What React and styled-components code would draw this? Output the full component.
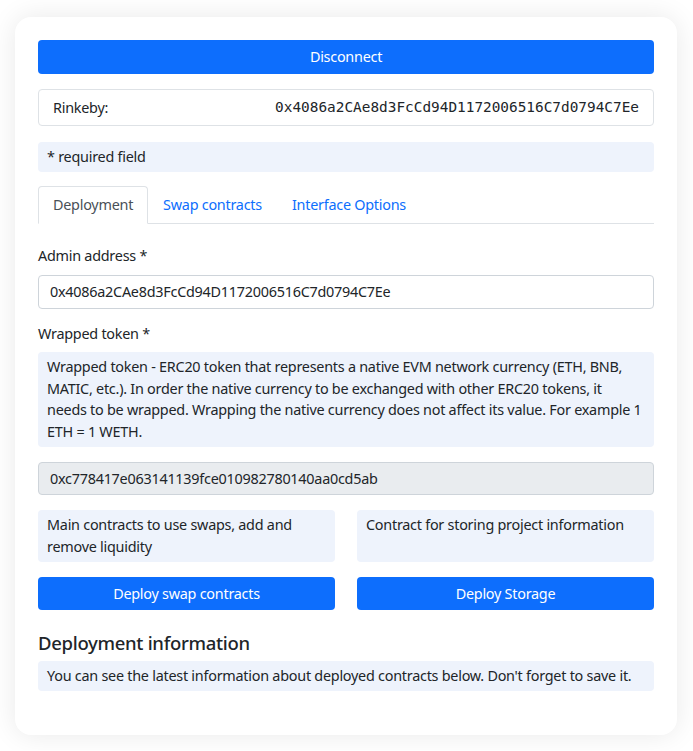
import styled, { createGlobalStyle } from "styled-components";

const GlobalStyle = createGlobalStyle`
  * { box-sizing: border-box; }
  body {
    margin: 0;
    background: #fff;
    font-family: "Noto Sans", "Open Sans", sans-serif;
    font-size: 14.4px;
    letter-spacing: -0.25px;
    line-height: 1.5;
    color: #212529;
  }
`;

const Page = styled.div`
  padding: 17px 16px 15px 15px;
`;

const Card = styled.div`
  background: #fff;
  border-radius: 16px;
  box-shadow: 0 0 28px rgba(0, 0, 0, 0.09);
  padding: 23px 23px 44px;
  display: flex;
  flex-direction: column;
`;

const Button = styled.button`
  width: 100%;
  border: none;
  border-radius: 4px;
  background: #0d6efd;
  color: #fff;
  font: inherit;
  letter-spacing: inherit;
  line-height: 1.5;
  padding: 6px 12px;
  cursor: pointer;
`;

const Network = styled.div`
  margin-top: 15px;
  display: flex;
  justify-content: space-between;
  align-items: center;
  border: 1px solid #dee2e6;
  border-radius: 4px;
  padding: 7px 14px;

  code {
    font-family: "DejaVu Sans Mono", monospace;
    font-size: 14.4px;
    letter-spacing: 0;
  }
`;

const Note = styled.div`
  margin-top: ${(p) => p.$mt || 0}px;
  background: #eef3fc;
  border-radius: 4px;
  padding: 4px 9px;
  min-height: ${(p) => p.$minH || 0}px;
`;

const Tabs = styled.div`
  margin-top: 14px;
  display: flex;
  border-bottom: 1px solid #dee2e6;
`;

const Tab = styled.div`
  margin-bottom: -1px;
  padding: 7px 14px 8px;
  border: 1px solid ${(p) => (p.$active ? "#dee2e6" : "transparent")};
  border-bottom-color: ${(p) => (p.$active ? "#fff" : "transparent")};
  border-radius: 4px 4px 0 0;
  background: ${(p) => (p.$active ? "#fff" : "transparent")};
  color: ${(p) => (p.$active ? "#495057" : "#0d6efd")};
`;

const Label = styled.div`
  margin-top: ${(p) => p.$mt}px;
  margin-bottom: 8px;
`;

const Input = styled.div`
  border: 1px solid #ced4da;
  border-radius: 4px;
  padding: 5px 11px;
  background: ${(p) => (p.$disabled ? "#e9ecef" : "#fff")};
  margin-top: ${(p) => p.$mt || 0}px;
`;

const Columns = styled.div`
  margin-top: 15px;
  display: grid;
  grid-template-columns: 1fr 1fr;
  column-gap: 22px;
  row-gap: 15px;
`;

const Heading = styled.h5`
  margin: 22px 0 7px;
  font-size: 18.5px;
  letter-spacing: -0.3px;
  font-weight: 500;
  line-height: 1.2;
`;

const address = "0x4086a2CAe8d3FcCd94D1172006516C7d0794C7Ee";

export default function App() {
  return (
    <>
      <GlobalStyle />
      <Page>
        <Card>
          <Button>Disconnect</Button>
          <Network>
            <span>Rinkeby:</span>
            <code>{address}</code>
          </Network>
          <Note $mt={16}>* required field</Note>
          <Tabs>
            <Tab $active>Deployment</Tab>
            <Tab>Swap contracts</Tab>
            <Tab>Interface Options</Tab>
          </Tabs>
          <Label $mt={21}>Admin address *</Label>
          <Input>{address}</Input>
          <Label $mt={14}>Wrapped token *</Label>
          <Note>
            Wrapped token - ERC20 token that represents a native EVM network
            currency (ETH, BNB,
            <br />
            MATIC, etc.). In order the native currency to be exchanged with
            other ERC20 tokens, it
            <br />
            needs to be wrapped. Wrapping the native currency does not affect
            its value. For example 1
            <br />
            ETH = 1 WETH.
          </Note>
          <Input $disabled $mt={15}>
            0xc778417e063141139fce010982780140aa0cd5ab
          </Input>
          <Columns>
            <Note $minH={51}>
              Main contracts to use swaps, add and remove liquidity
            </Note>
            <Note $minH={51}>Contract for storing project information</Note>
            <Button>Deploy swap contracts</Button>
            <Button>Deploy Storage</Button>
          </Columns>
          <Heading>Deployment information</Heading>
          <Note>
            You can see the latest information about deployed contracts below.
            Don't forget to save it.
          </Note>
        </Card>
      </Page>
    </>
  );
}
